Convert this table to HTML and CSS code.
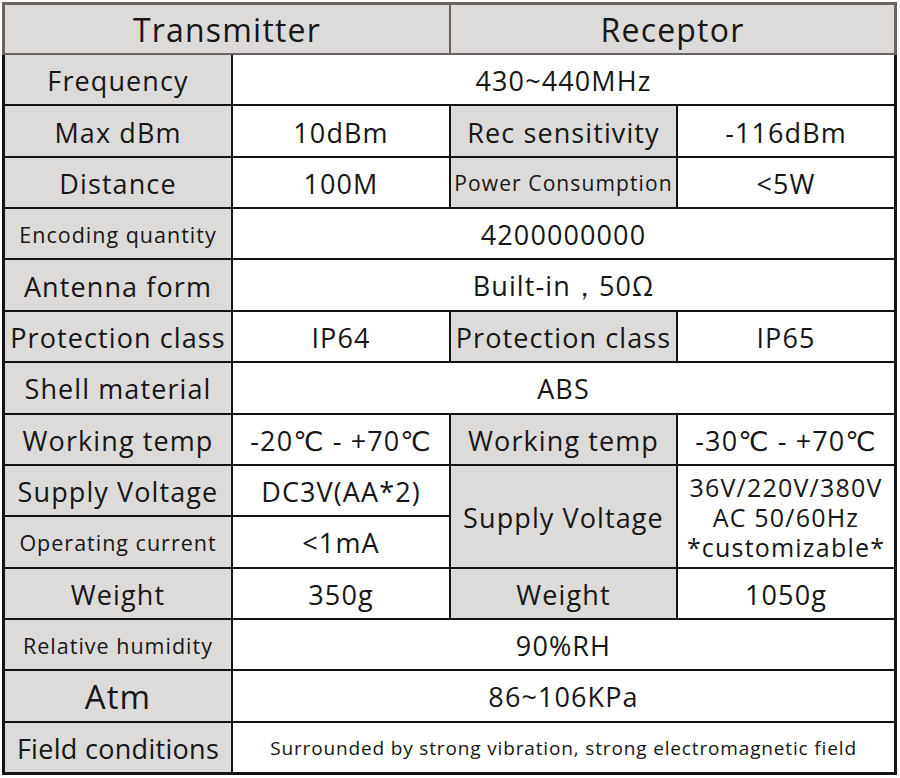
FILE: index.html
```html
<!DOCTYPE html>
<html>
<head>
<meta charset="utf-8">
<link rel="stylesheet" href="styles.css">
</head>
<body>
<div class="sheet">
  <div class="head">
    <div class="cell g hd span2">Transmitter</div>
    <div class="cell g hd span2">Receptor</div>
  </div>
  <div class="body">
    <div class="cell g">Frequency</div>
    <div class="cell w span3">430~440MHz</div>

    <div class="cell g">Max dBm</div>
    <div class="cell w">10dBm</div>
    <div class="cell g">Rec sensitivity</div>
    <div class="cell w">-116dBm</div>

    <div class="cell g">Distance</div>
    <div class="cell w">100M</div>
    <div class="cell g sm tight">Power Consumption</div>
    <div class="cell w">&lt;5W</div>

    <div class="cell g sm">Encoding quantity</div>
    <div class="cell w span3">4200000000</div>

    <div class="cell g">Antenna form</div>
    <div class="cell w span3">Built-in，50Ω</div>

    <div class="cell g">Protection class</div>
    <div class="cell w">IP64</div>
    <div class="cell g">Protection class</div>
    <div class="cell w">IP65</div>

    <div class="cell g">Shell material</div>
    <div class="cell w span3">ABS</div>

    <div class="cell g">Working temp</div>
    <div class="cell w">-20℃ - +70℃</div>
    <div class="cell g">Working temp</div>
    <div class="cell w">-30℃ - +70℃</div>

    <div class="cell g">Supply Voltage</div>
    <div class="cell w">DC3V(AA*2)</div>
    <div class="cell g rows2">Supply Voltage</div>
    <div class="cell w rows2 multi">36V/220V/380V<br>AC 50/60Hz<br>*customizable*</div>

    <div class="cell g sm">Operating current</div>
    <div class="cell w">&lt;1mA</div>

    <div class="cell g">Weight</div>
    <div class="cell w">350g</div>
    <div class="cell g">Weight</div>
    <div class="cell w">1050g</div>

    <div class="cell g sm">Relative humidity</div>
    <div class="cell w span3">90%RH</div>

    <div class="cell g big">Atm</div>
    <div class="cell w span3">86~106KPa</div>

    <div class="cell g narrow">Field conditions</div>
    <div class="cell w span3 xs">Surrounded by strong vibration, strong electromagnetic field</div>
  </div>
</div>
</body>
</html>
```

FILE: styles.css
```css
html, body {
  margin: 0;
  padding: 0;
  background: #ffffff;
}
body {
  font-family: "Open Sans", "DejaVu Sans", sans-serif;
  color: #161616;
}
.sheet {
  margin: 2px 0 0 2px;
  width: 895px;
}
.head {
  display: grid;
  grid-template-columns: 226px 216px 225px 216px;
  grid-template-rows: 48px;
  gap: 2px;
  background: #6a625e;
  border: 3px solid #6a625e;
  border-bottom: 2px solid #6a625e;
}
.body {
  display: grid;
  grid-template-columns: 226px 216px 225px 216px;
  grid-template-rows: repeat(14, 1fr);
  gap: 2px;
  height: 720px;
  box-sizing: border-box;
  background: #141414;
  border: 3px solid #141414;
  border-top: none;
}
.cell {
  display: flex;
  align-items: center;
  justify-content: center;
  text-align: center;
  font-size: 27px;
  letter-spacing: 1.1px;
  white-space: nowrap;
  overflow: hidden;
  padding-top: 2px;
}
.g { background: #dcdbd9; }
.w { background: #ffffff; }
.hd { font-size: 32px; letter-spacing: 1.2px; padding-top: 0; }
.span2 { grid-column: span 2; }
.span3 { grid-column: span 3; }
.rows2 { grid-row: span 2; }
.sm { font-size: 21.5px; letter-spacing: 1px; }
.tight { font-size: 21px; letter-spacing: 1.1px; }
.xs { font-size: 19px; letter-spacing: 0.85px; }
.big { font-size: 33px; }
.narrow { letter-spacing: 0.3px; }
.multi { font-size: 25px; line-height: 30px; letter-spacing: 1.2px; }
```
